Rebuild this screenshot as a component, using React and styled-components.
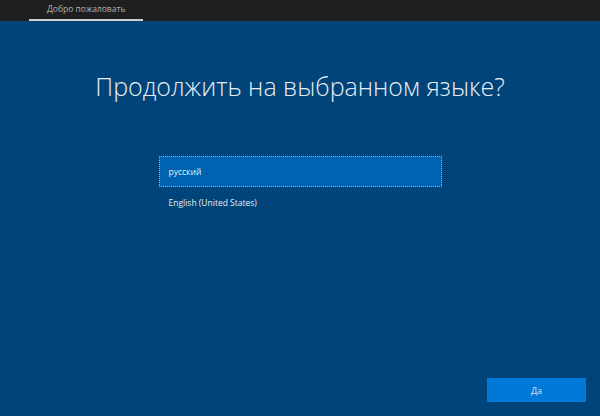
import styled, { createGlobalStyle } from 'styled-components';

const GlobalStyle = createGlobalStyle`
	html, body {
		margin: 0;
		padding: 0;
		background: #014479;
	}
	body {
		font-family: "Open Sans", "Noto Sans", sans-serif;
	}
`;

const Page = styled.div`
	width: 600px;
	height: 416px;
	display: flex;
	flex-direction: column;
	background: #014479;
	overflow: hidden;
`;

const TopBar = styled.div`
	height: 21px;
	background: #1f1f1f;
	display: flex;
	padding-left: 29px;
	box-sizing: border-box;
`;

const Tab = styled.div`
	width: 114px;
	height: 21px;
	box-sizing: border-box;
	padding-left: 18px;
	padding-top: 3px;
	font-size: 8.5px;
	color: #b0b0b0;
	border-bottom: 2px solid ${(p) => (p.active ? '#d0d0d0' : 'transparent')};
`;

const Main = styled.div`
	flex: 1;
	display: flex;
	flex-direction: column;
	align-items: center;
	padding-top: 50px;
	padding-bottom: 14px;
	padding-right: 14px;
	box-sizing: border-box;
`;

const Title = styled.h1`
	margin: 0;
	font-size: 25px;
	line-height: 30px;
	font-weight: 300;
	color: #e6edf4;
	padding-left: 14px;
`;

const List = styled.div`
	margin-top: 55px;
	margin-left: 14px;
	width: 283px;
	display: flex;
	flex-direction: column;
`;

const Item = styled.div`
	height: 31px;
	box-sizing: border-box;
	display: flex;
	align-items: center;
	padding-left: 9px;
	font-size: 8.5px;
	color: #e6edf4;
	background: ${(p) => (p.selected ? '#0063b1' : 'transparent')};
	border: 1px dotted ${(p) => (p.selected ? '#8fb3d6' : 'transparent')};
`;

const Spacer = styled.div`
	flex: 1;
`;

const Footer = styled.div`
	align-self: stretch;
	display: flex;
	justify-content: flex-end;
`;

const Button = styled.button`
	width: 99px;
	height: 24px;
	border: none;
	background: #0078d7;
	color: #cfe3f5;
	font-family: "Open Sans", "Noto Sans", sans-serif;
	font-size: 9px;
	font-weight: 400;
	padding: 0;
`;

export default function App() {
	return (
		<Page>
			<GlobalStyle />
			<TopBar>
				<Tab active>Добро пожаловать</Tab>
			</TopBar>
			<Main>
				<Title>Продолжить на выбранном языке?</Title>
				<List>
					<Item selected>русский</Item>
					<Item>English (United States)</Item>
				</List>
				<Spacer />
				<Footer>
					<Button>Да</Button>
				</Footer>
			</Main>
		</Page>
	);
}
